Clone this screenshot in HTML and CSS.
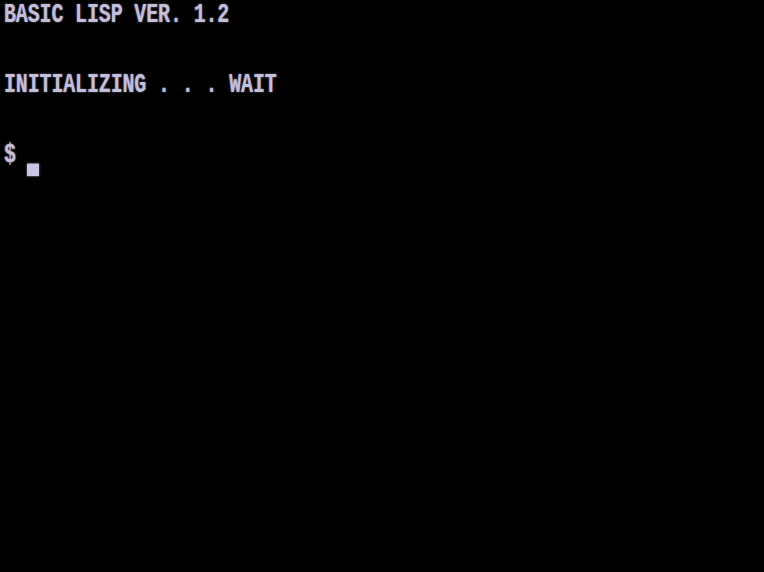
FILE: index.html
```html
<!DOCTYPE html>
<html>
<head>
<meta charset="utf-8">
<link rel="stylesheet" href="styles.css">
</head>
<body>
<div class="screen">
  <div class="line">BASIC LISP VER. 1.2</div>
  <div class="line"></div>
  <div class="line">INITIALIZING . . . WAIT</div>
  <div class="line"></div>
  <div class="line">$ <span class="cursor"></span></div>
</div>
</body>
</html>
```
FILE: styles.css
```css
html, body {
  margin: 0;
  padding: 0;
  background: #000;
  width: 764px;
  height: 572px;
  overflow: hidden;
}
.screen {
  padding: 0 0 0 4px;
  transform: translateY(-3px) scaleY(1.4);
  transform-origin: 0 0;
  font-family: "Liberation Mono", monospace;
  font-size: 20px;
  font-weight: bold;
  letter-spacing: -0.15px;
  color: #c2bedc;
  text-shadow: 0 0 1.5px rgba(200, 196, 230, 0.7);
}
.line {
  height: 25px;
  line-height: 25px;
  white-space: pre;
}
.cursor {
  display: inline-block;
  width: 12px;
  height: 9px;
  background: #c8c6e6;
  position: relative;
  top: 10px;
  left: -1px;
  box-shadow: 0 0 2px rgba(200, 196, 230, 0.6);
}
```
